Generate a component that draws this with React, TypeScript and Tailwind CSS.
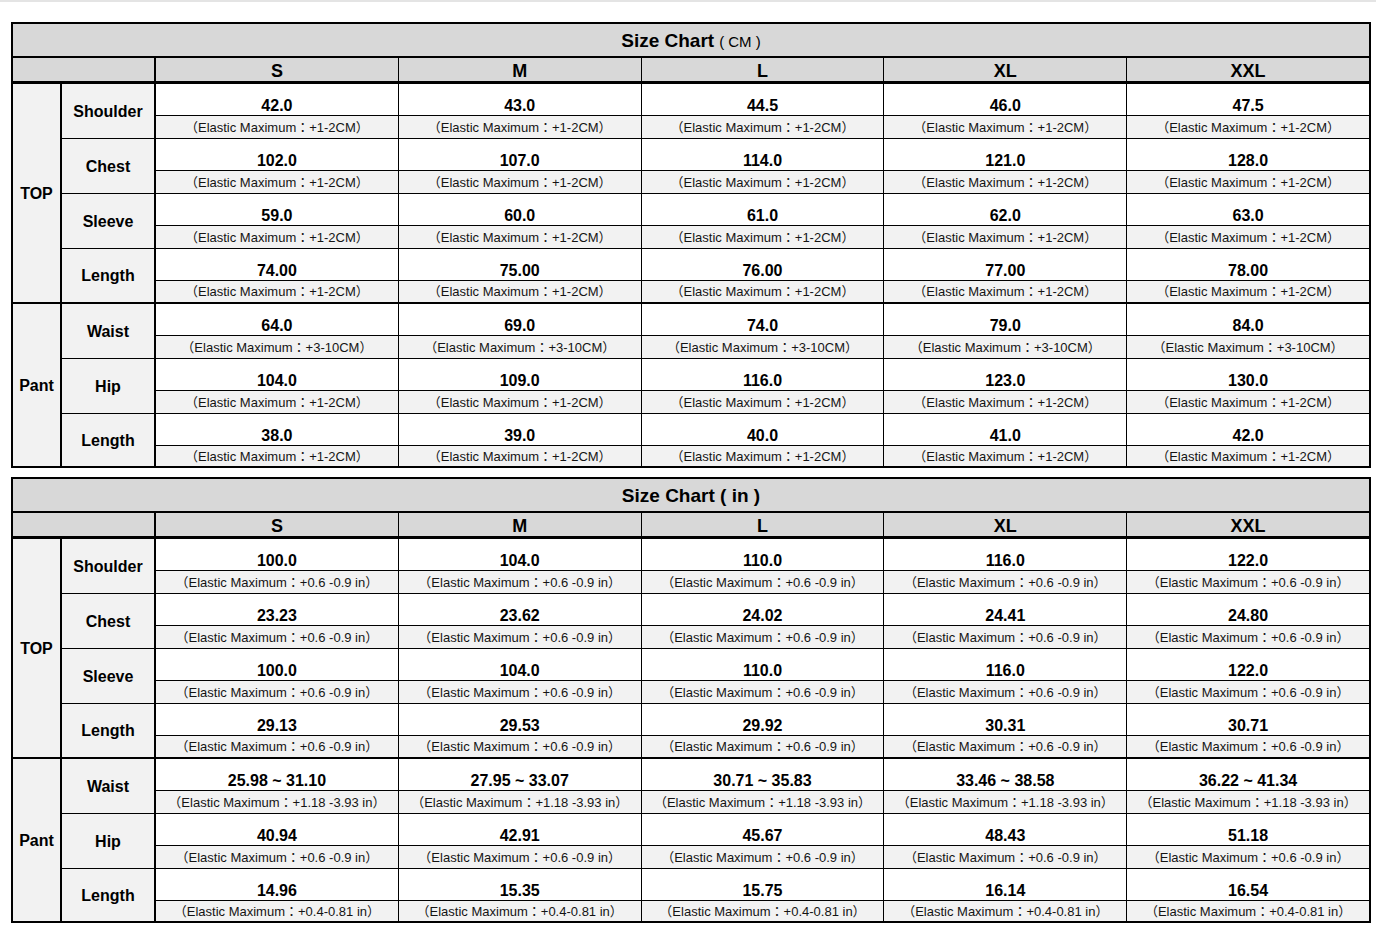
import React from "react";

type Row = { label: string; values: string[]; note: string };
type Group = { name: string; rows: Row[] };

const sizes = ["S", "M", "L", "XL", "XXL"];

const cmNote = "（Elastic Maximum：+1-2CM）";
const inNote = "（Elastic Maximum：+0.6 -0.9 in）";

const cmGroups: Group[] = [
  {
    name: "TOP",
    rows: [
      { label: "Shoulder", values: ["42.0", "43.0", "44.5", "46.0", "47.5"], note: cmNote },
      { label: "Chest", values: ["102.0", "107.0", "114.0", "121.0", "128.0"], note: cmNote },
      { label: "Sleeve", values: ["59.0", "60.0", "61.0", "62.0", "63.0"], note: cmNote },
      { label: "Length", values: ["74.00", "75.00", "76.00", "77.00", "78.00"], note: cmNote },
    ],
  },
  {
    name: "Pant",
    rows: [
      { label: "Waist", values: ["64.0", "69.0", "74.0", "79.0", "84.0"], note: "（Elastic Maximum：+3-10CM）" },
      { label: "Hip", values: ["104.0", "109.0", "116.0", "123.0", "130.0"], note: cmNote },
      { label: "Length", values: ["38.0", "39.0", "40.0", "41.0", "42.0"], note: cmNote },
    ],
  },
];

const inGroups: Group[] = [
  {
    name: "TOP",
    rows: [
      { label: "Shoulder", values: ["100.0", "104.0", "110.0", "116.0", "122.0"], note: inNote },
      { label: "Chest", values: ["23.23", "23.62", "24.02", "24.41", "24.80"], note: inNote },
      { label: "Sleeve", values: ["100.0", "104.0", "110.0", "116.0", "122.0"], note: inNote },
      { label: "Length", values: ["29.13", "29.53", "29.92", "30.31", "30.71"], note: inNote },
    ],
  },
  {
    name: "Pant",
    rows: [
      {
        label: "Waist",
        values: ["25.98 ~ 31.10", "27.95 ~ 33.07", "30.71 ~ 35.83", "33.46 ~ 38.58", "36.22 ~ 41.34"],
        note: "（Elastic Maximum：+1.18 -3.93 in）",
      },
      { label: "Hip", values: ["40.94", "42.91", "45.67", "48.43", "51.18"], note: inNote },
      { label: "Length", values: ["14.96", "15.35", "15.75", "16.14", "16.54"], note: "（Elastic Maximum：+0.4-0.81 in）" },
    ],
  },
];

function SizeRow({ row, height, last }: { row: Row; height: string; last: boolean }) {
  return (
    <div className={`flex ${height} ${last ? "" : "border-b border-black"}`}>
      <div className="w-[94px] shrink-0 border-r-2 border-black bg-[#f2f2f2] flex items-center justify-center pt-[1px] text-[16px] font-bold">
        {row.label}
      </div>
      {row.values.map((v, i) => (
        <div key={i} className={`flex-1 flex flex-col min-w-0 ${i > 0 ? "border-l border-black" : ""}`}>
          <div className="h-[32px] shrink-0 border-b border-black bg-white flex items-end justify-center text-[16px] leading-[18px] font-bold text-black">
            {v}
          </div>
          <div className="flex-1 bg-[#f2f2f2] flex items-center justify-center pt-[1px] text-[13px] leading-[16px] text-[#141414] whitespace-nowrap">
            {row.note}
          </div>
        </div>
      ))}
    </div>
  );
}

function Chart({ title, groups }: { title: React.ReactNode; groups: Group[] }) {
  return (
    <div className="w-[1360px] ml-[11px] border-2 border-black">
      {/* title bar */}
      <div className="h-[34px] border-b-2 border-black bg-[#d8d8d8] flex items-center justify-center pt-[3px]">
        {title}
      </div>
      {/* size header */}
      <div className="h-[26px] border-b-[3px] border-black bg-[#d8d8d8] flex">
        <div className="w-[143px] shrink-0 border-r-2 border-black" />
        {sizes.map((s, i) => (
          <div
            key={s}
            className={`flex-1 flex items-center justify-center pt-[3px] text-[18px] font-bold ${i > 0 ? "border-l border-black" : ""}`}
          >
            {s}
          </div>
        ))}
      </div>
      {groups.map((g, gi) => {
        const lastGroup = gi === groups.length - 1;
        return (
          <div key={g.name} className={`flex ${lastGroup ? "" : "border-b-2 border-black"}`}>
            <div className="w-[49px] shrink-0 border-r-2 border-black bg-[#f2f2f2] flex items-center justify-center pt-[2px] text-[16px] font-bold">
              {g.name}
            </div>
            <div className="flex-1 flex flex-col">
              {g.rows.map((r, ri) => {
                const lastRow = ri === g.rows.length - 1;
                const h = !lastRow ? "h-[55px]" : lastGroup ? "h-[52px]" : "h-[53px]";
                return <SizeRow key={ri} row={r} height={h} last={lastRow} />;
              })}
            </div>
          </div>
        );
      })}
    </div>
  );
}

export default function App() {
  return (
    <div className="w-[1376px] min-h-[926px] bg-white text-black font-['Liberation_Sans','Noto_Sans_CJK_TC',sans-serif]">
      <div className="h-[2px] bg-[#e4e4e4]" />
      <div className="pt-[20px] flex flex-col gap-[9px]">
        <Chart
          title={
            <span className="flex items-baseline gap-[5px]">
              <span className="text-[19px] font-bold">Size Chart</span>
              <span className="text-[15px]">( CM )</span>
            </span>
          }
          groups={cmGroups}
        />
        <Chart title={<span className="text-[19px] font-bold">Size Chart ( in )</span>} groups={inGroups} />
      </div>
    </div>
  );
}
